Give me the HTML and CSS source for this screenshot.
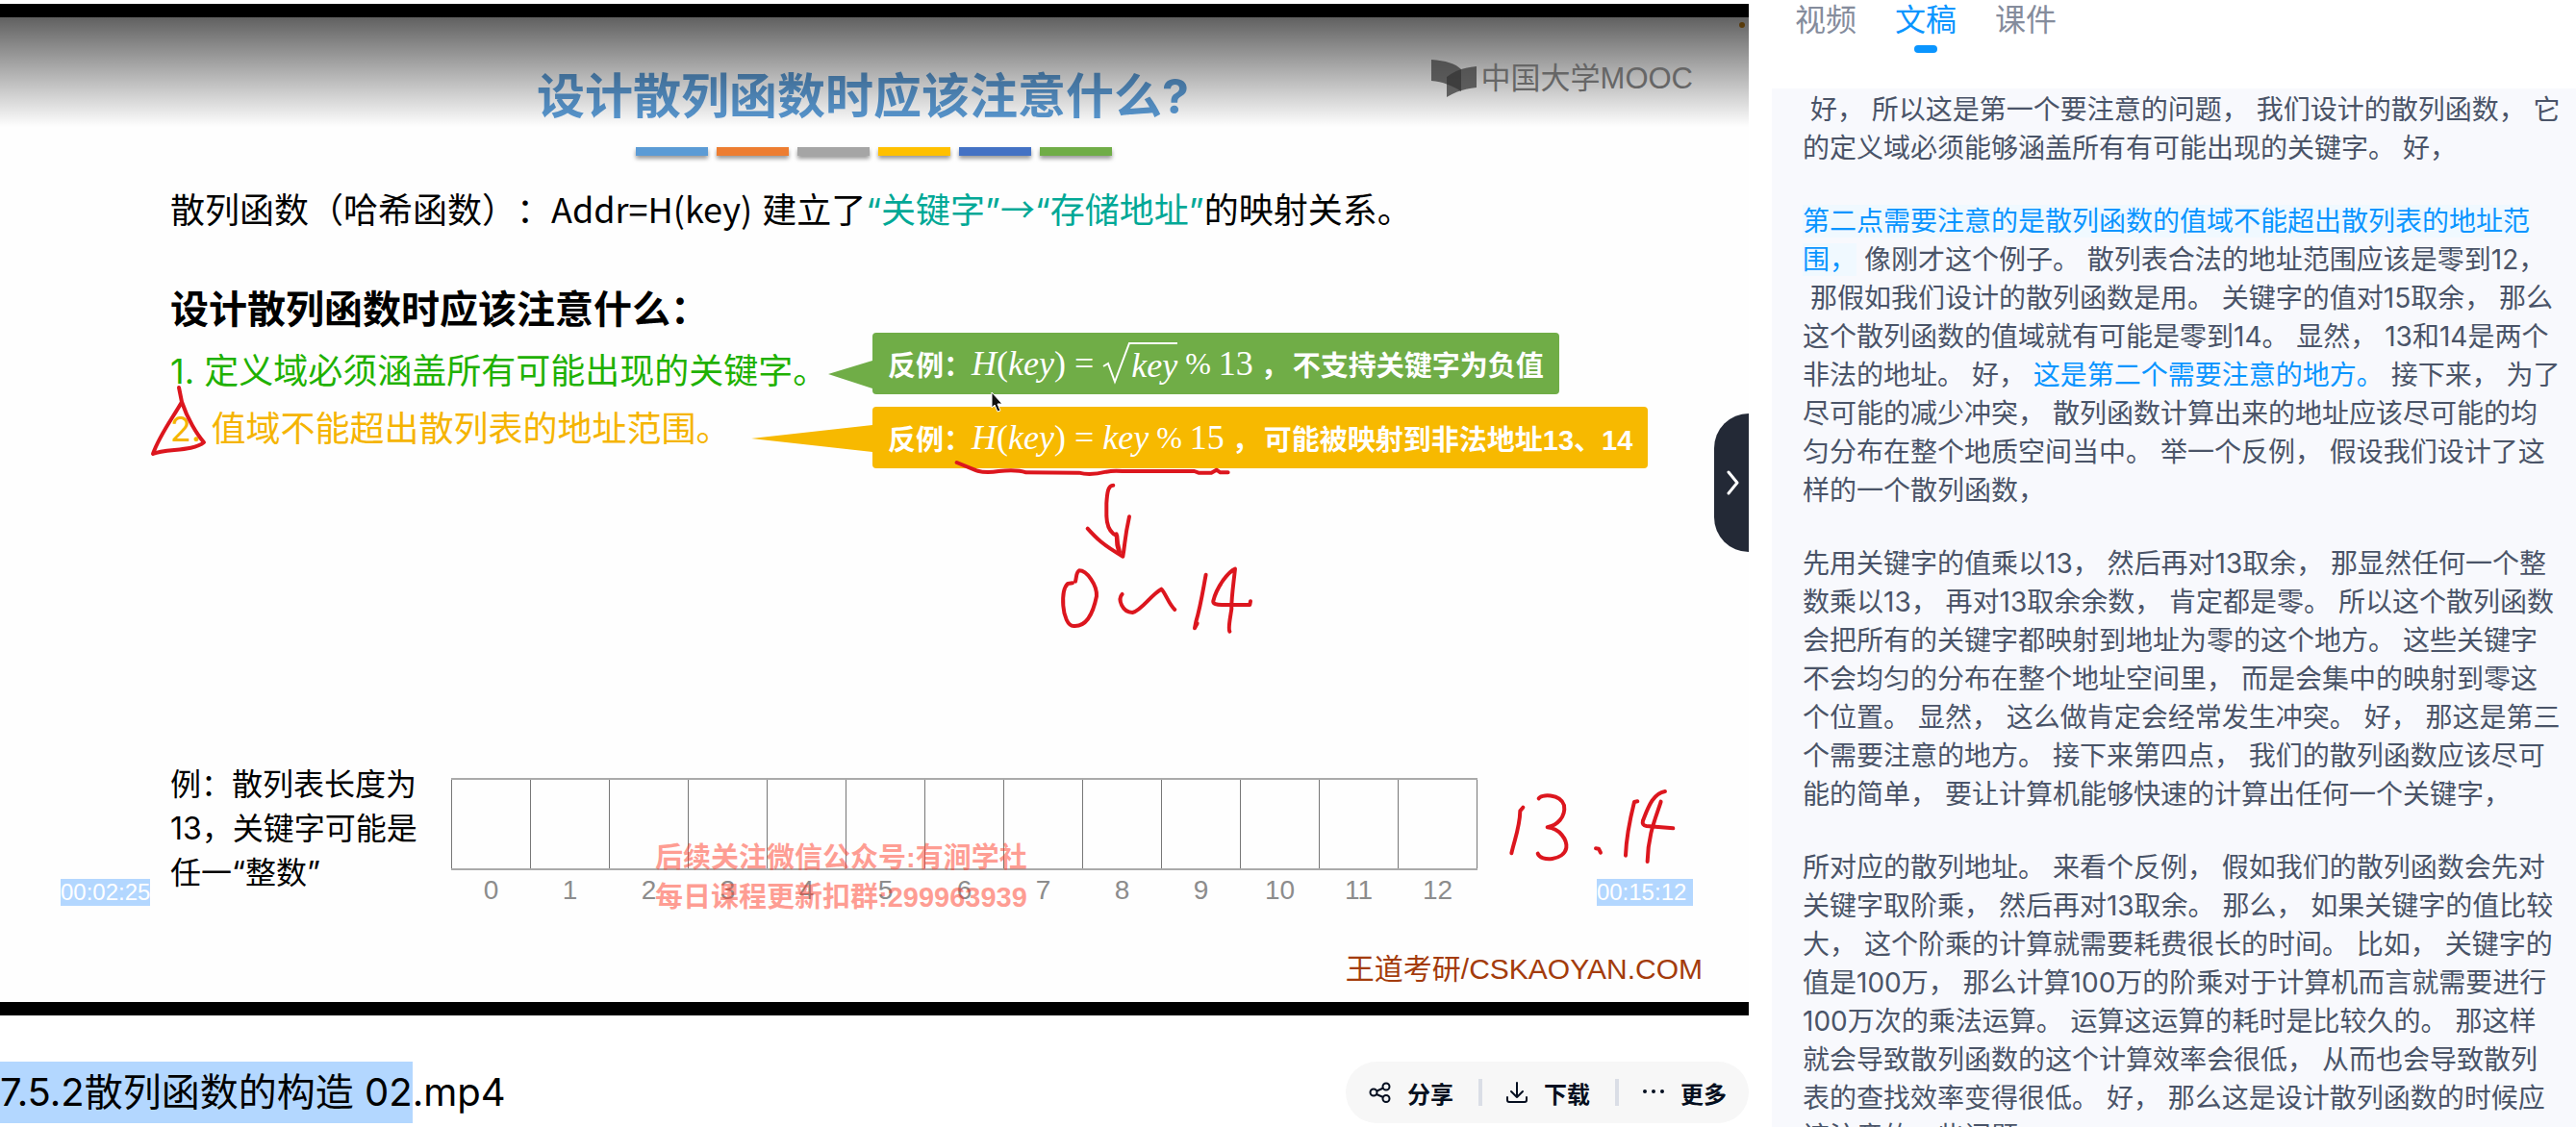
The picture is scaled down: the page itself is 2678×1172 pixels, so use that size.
FILE: index.html
```html
<!DOCTYPE html>
<html lang="zh-CN">
<head>
<meta charset="utf-8">
<title>7.5.2散列函数的构造 02.mp4</title>
<link rel="stylesheet" href="styles.css">
</head>
<body>
<div class="page">
  <main class="player">
    <section class="video">
      <div class="slide">
        <h1 class="slide-title">设计散列函数时应该注意什么?</h1>
        <div class="bars">
          <span class="bar bar-sky"></span><span class="bar bar-orange"></span><span class="bar bar-gray"></span><span class="bar bar-gold"></span><span class="bar bar-blue"></span><span class="bar bar-green"></span>
        </div>
        <p class="intro">散列函数（哈希函数）<span class="mid-colon">：</span><span class="formula">Addr=H(key)</span> 建立了<span class="teal">“关键字”<span class="formula">→</span>“存储地址”</span>的映射关系。</p>
        <h2 class="subhead">设计散列函数时应该注意什么：</h2>
        <div class="rules">
          <div class="rule-list">
            <p class="rule rule-green">1. 定义域必须涵盖所有可能出现的关键字。</p>
            <p class="rule rule-gold">2. 值域不能超出散列表的地址范围。</p>
          </div>
          <div class="callouts">
            <div class="callout callout-green">
              <svg class="tail tail-short" viewBox="0 0 46 64"><path d="M46 29L0 43L46 58Z" fill="#70ad47"/></svg>
              <span>反例：</span><span class="math"><i>H</i>(<i>key</i>) = </span><span class="root"><svg class="radical" viewBox="0 0 30 44"><path d="M1 25L6 22L13 41L28 1H30" fill="none" stroke="#fff" stroke-width="2"/></svg><span class="math radicand"><i>key</i></span></span><span class="math percent">%</span><span class="math">13</span><span class="math-comma">，</span><span>不支持关键字为负值</span>
            </div>
            <div class="callout callout-gold">
              <svg class="tail tail-long" viewBox="0 0 126 64"><path d="M126 19L0 33L126 47Z" fill="#f7b900"/></svg>
              <span>反例：</span><span class="math"><i>H</i>(<i>key</i>) = <i>key</i></span><span class="math percent">%</span><span class="math">15</span><span class="math-comma">，</span><span>可能被映射到非法地址13、14</span>
            </div>
          </div>
        </div>
        <div class="example">
          <p class="example-text">例：散列表长度为<br>13，关键字可能是<br>任一“整数”</p>
          <table class="cells">
            <tbody>
              <tr class="slots"><td></td><td></td><td></td><td></td><td></td><td></td><td></td><td></td><td></td><td></td><td></td><td></td><td></td></tr>
              <tr class="indexes"><td>0</td><td>1</td><td>2</td><td>3</td><td>4</td><td>5</td><td>6</td><td>7</td><td>8</td><td>9</td><td>10</td><td>11</td><td>12</td></tr>
            </tbody>
          </table>
        </div>
        <p class="credit">王道考研/CSKAOYAN.COM</p>

        <svg class="ink" viewBox="0 18 1818 1024" aria-hidden="true">
          <g fill="none" stroke="#dc161e" stroke-linecap="round" stroke-linejoin="round">
            <path stroke-width="4" d="M186 403L189 418C180 434 166 452 159 472C172 466 200 470 212 460C205 452 195 436 189 418"/>
            <g transform="translate(970 470) scale(.3333)" stroke-width="12">
              <path d="M74 33L130 56Q160 68 205 60Q260 54 290 64L455 65Q490 74 540 62Q560 58 590 60L815 60L828 65L868 65L884 56L896 64L920 64"/>
              <path d="M562 104C545 104 543 130 541 160V200C542 230 550 245 562 255L574 262L576 285L582 312"/>
              <path d="M482 239C510 270 530 290 592 326C600 280 597 270 612 202"/>
              <path d="M572 256L574 290L578 305"/>
              <path d="M435 409L420 411C405 425 404 450 406 480C408 510 420 545 440 543C480 545 500 500 510 450C512 415 480 370 456 370C446 375 448 390 444 404"/>
              <path d="M590 444C575 460 590 500 622 501C650 495 680 445 712 428C725 440 735 475 754 492"/>
              <path d="M851 383C842 430 835 480 820 530L816 550L824 535"/>
              <path d="M990 466L988 477H905Q872 478 874 465C885 420 920 375 942 365C935 430 930 460 931 490C925 530 920 550 925 560"/>
            </g>
            <g transform="translate(1540 800) scale(.3333)" stroke-width="12">
              <path d="M130 119L121 130C120 180 105 215 94 262"/>
              <path d="M179 91C185 78 245 75 258 112C264 150 235 175 206 181C245 185 268 220 265 245C258 285 185 290 176 263"/>
              <path d="M357 247L366 248L372 260"/>
              <path d="M487 100L477 102C465 150 452 215 450 269"/>
              <path d="M573 69C535 75 520 120 504 160Q500 175 515 177L598 184"/>
              <path d="M560 101C545 150 520 200 518 288"/>
            </g>
          </g>
          <path d="M1031 408V424L1034 421L1037 428L1040 427L1037 420H1042Z" fill="#111" stroke="#fff" stroke-width="1"/>
          <circle cx="1811" cy="26" r="3" fill="#d08a1a"/>
        </svg>
        <p class="watermark">后续关注微信公众号:有涧学社<br>每日课程更新扣群:299963939</p>
        <div class="shade"></div>
        <div class="logo">
          <svg class="logo-mark" viewBox="0 0 48 40"><path d="M0 0C15 1 25 4 31 10V33C22 27 12 23 0 22Z" fill="#333" fill-opacity=".72"/><path d="M16 39V18C25 11 35 8 47 7V29C36 30 26 33 16 39Z" fill="#333" fill-opacity=".72"/></svg>
          <span>中国大学MOOC</span>
        </div>
      </div>
      <time class="clock clock-now">00:02:25</time>
      <time class="clock clock-total">00:15:12 </time>
      <button class="handle" type="button" aria-label="收起"><svg viewBox="0 0 16 26" width="16" height="26"><path d="M3 2L12 13L3 24" fill="none" stroke="#fff" stroke-width="3" stroke-linecap="round" stroke-linejoin="round"/></svg></button>
    </section>
    <footer class="info">
      <h2 class="filename"><mark>7.5.2散列函数的构造 02</mark>.mp4</h2>
      <div class="actions">
        <button class="action" type="button"><svg viewBox="0 0 24 24" width="24" height="24" fill="none" stroke="#050f20" stroke-width="2"><circle cx="5" cy="12" r="3.5"/><circle cx="18" cy="6" r="3.5"/><circle cx="18" cy="18.5" r="3.5"/><path d="M8.5 10.500L15 7.500M8 14L15 17"/></svg><span>分享</span></button>
        <button class="action" type="button"><svg viewBox="0 0 24 24" width="24" height="24" fill="none" stroke="#050f20" stroke-width="2" stroke-linecap="round" stroke-linejoin="round"><path d="M12 2V17M6 11L12 17L18 11M2 17V20Q2 22 4 22H20Q22 22 22 20V17"/></svg><span>下载</span></button>
        <button class="action" type="button"><svg viewBox="0 0 24 24" width="24" height="24" fill="#050f20"><circle cx="3" cy="11" r="2"/><circle cx="12" cy="11" r="2"/><circle cx="21" cy="11" r="2"/></svg><span>更多</span></button>
      </div>
    </footer>
  </main>
  <aside class="side">
    <nav class="tabs">
      <a class="tab" href="#video">视频</a>
      <a class="tab tab-active" href="#text">文稿</a>
      <a class="tab" href="#slides">课件</a>
    </nav>
    <div class="transcript" id="text">
      <p> 好， 所以这是第一个要注意的问题， 我们设计的散列函数， 它
的定义域必须能够涵盖所有有可能出现的关键字。 好，</p>
      <p><span class="hit">第二点需要注意的是散列函数的值域不能超出散列表的地址范
围，</span> 像刚才这个例子。 散列表合法的地址范围应该是零到12，
 那假如我们设计的散列函数是用。 关键字的值对15取余， 那么
这个散列函数的值域就有可能是零到14。 显然， 13和14是两个
非法的地址。 好， <span class="note">这是第二个需要注意的地方。</span> 接下来， 为了
尽可能的减少冲突， 散列函数计算出来的地址应该尽可能的均
匀分布在整个地质空间当中。 举一个反例， 假设我们设计了这
样的一个散列函数，</p>
      <p>先用关键字的值乘以13， 然后再对13取余， 那显然任何一个整
数乘以13， 再对13取余余数， 肯定都是零。 所以这个散列函数
会把所有的关键字都映射到地址为零的这个地方。 这些关键字
不会均匀的分布在整个地址空间里， 而是会集中的映射到零这
个位置。 显然， 这么做肯定会经常发生冲突。 好， 那这是第三
个需要注意的地方。 接下来第四点， 我们的散列函数应该尽可
能的简单， 要让计算机能够快速的计算出任何一个关键字，</p>
      <p>所对应的散列地址。 来看个反例， 假如我们的散列函数会先对
关键字取阶乘， 然后再对13取余。 那么， 如果关键字的值比较
大， 这个阶乘的计算就需要耗费很长的时间。 比如， 关键字的
值是100万， 那么计算100万的阶乘对于计算机而言就需要进行
100万次的乘法运算。 运算这运算的耗时是比较久的。 那这样
就会导致散列函数的这个计算效率会很低， 从而也会导致散列
表的查找效率变得很低。 好， 那么这是设计散列函数的时候应
该注意的一些问题。</p>
    </div>
  </aside>
</div>
</body>
</html>
```

FILE: styles.css
```css
* { box-sizing: border-box; }
body {
  margin: 0;
  background: #fff;
  color: #000;
  font-family: Inter, "Noto Sans CJK SC", sans-serif;
  text-spacing-trim: space-all;
}
h1, h2, p { margin: 0; font-weight: 400; }
button { border: 0; padding: 0; background: none; font: inherit; color: inherit; }
svg { display: block; }

.page {
  display: grid;
  grid-template-columns: 1818fr 860fr;
  height: 100vh;
  overflow: hidden;
}
.player { padding-top: 4px; min-width: 0; }

.video { position: relative; padding: 14px 0; background: #000; }
.slide {
  position: relative;
  height: 1024px;
  padding-top: 52px;
  background: #fefefe;
  overflow: hidden;
  white-space: nowrap;
}
.slide-title {
  color: #5b9bd5;
  font-size: 50px;
  font-weight: 700;
  line-height: 60px;
  text-align: center;
  padding-right: 24px;
}
.bars { display: flex; justify-content: center; gap: 9px; padding: 23px 2px 0 0; }
.bar { width: 75px; height: 9px; box-shadow: 0 3px 4px rgba(0, 0, 0, .4); }
.bar-sky { background: #5b9bd5; }
.bar-orange { background: #ed7d31; }
.bar-gray { background: #a5a5a5; }
.bar-gold { background: #ffc000; }
.bar-blue { background: #4472c4; }
.bar-green { background: #70ad47; }

.intro { padding: 30px 0 0 177px; font-size: 36px; line-height: 48px; }
.mid-colon { font-family: "Noto Sans CJK JP", sans-serif; }
.formula { font-family: "Noto Sans CJK SC", sans-serif; }
.teal { color: #00a896; }
.subhead { padding: 55px 0 0 177px; font-size: 40px; line-height: 48px; font-weight: 700; }

.rules { display: grid; grid-template-columns: 730px 1fr; padding-left: 177px; }
.rule-list { padding-top: 10px; }
.rule { font-size: 36px; line-height: 60px; }
.rule-green { color: #1fb100; }
.rule-gold { color: #f5b400; }
.callouts { display: flex; flex-direction: column; align-items: flex-start; gap: 13px; }
.callout {
  position: relative;
  display: flex;
  align-items: center;
  height: 64px;
  padding: 0 16px;
  border-radius: 4px;
  color: #fff;
  font-family: "Liberation Sans", "Noto Sans CJK SC", sans-serif;
  font-size: 29px;
  font-weight: 700;
}
.callout-green { background: #70ad47; }
.callout-gold { background: #f7b900; }
.tail { position: absolute; right: 100%; top: 0; height: 64px; }
.tail-short { width: 46px; }
.tail-long { width: 126px; }
.math { font-family: "Liberation Serif", serif; font-size: 36px; font-weight: 400; white-space: pre; }
.root { display: flex; align-items: center; }
.radical { width: 30px; height: 44px; }
.radicand { height: 44px; line-height: 44px; border-top: 2px solid #fff; }
.percent { font-size: 32px; padding: 0 8px; }
.math-comma { padding: 0 4px 0 8px; }

.example { display: flex; padding: 306px 0 0 177px; }
.example-text { width: 292px; font-size: 32px; line-height: 46px; }
.cells { table-layout: fixed; width: 1067px; margin-top: 16px; border-collapse: collapse; }
.cells td { padding: 0; }
.slots td { height: 94px; border: 2px solid #aaa; border-width: 2px 1px; border-left-color: #777; border-right-color: #777; }
.indexes td {
  height: 42px;
  color: #8c8c8c;
  font-family: "Liberation Sans", sans-serif;
  font-size: 28px;
  text-align: center;
}
.credit {
  position: absolute;
  right: 48px;
  bottom: 14px;
  color: #a33b0b;
  font-family: "Liberation Sans", "Noto Sans CJK SC", sans-serif;
  font-size: 30px;
  line-height: 40px;
}
.ink { position: absolute; left: 0; top: 0; width: 1818px; height: 1024px; }
.watermark {
  position: absolute;
  left: 681px;
  top: 854px;
  color: rgba(255, 60, 40, .5);
  font-family: "Liberation Sans", "Noto Sans CJK SC", sans-serif;
  font-size: 29px;
  font-weight: 700;
  line-height: 41px;
}
.shade {
  position: absolute;
  inset: 0 0 auto;
  height: 114px;
  background: linear-gradient(rgba(0, 0, 0, .62), rgba(0, 0, 0, .28) 55%, rgba(0, 0, 0, 0));
}
.logo {
  position: absolute;
  right: 58px;
  top: 40px;
  display: flex;
  align-items: center;
  gap: 4px;
  height: 48px;
  color: #666;
  font-family: "Liberation Sans", "Noto Sans CJK SC", sans-serif;
  font-size: 31px;
  line-height: 40px;
}
.logo-mark { width: 48px; height: 40px; }
.clock {
  position: absolute;
  top: 910px;
  height: 28px;
  background: #b3d7ff;
  color: #fff;
  font-family: "Liberation Sans", sans-serif;
  font-size: 24px;
  line-height: 28px;
  white-space: pre;
}
.clock-now { left: 63px; }
.clock-total { right: 58px; }
.handle {
  position: absolute;
  right: 0;
  top: 426px;
  width: 36px;
  height: 144px;
  padding-left: 12px;
  border-radius: 36px 0 0 36px;
  background: #232936;
}

.info { display: flex; justify-content: space-between; padding-top: 48px; }
.filename { font-size: 40px; line-height: 64px; white-space: nowrap; }
.filename mark { display: inline-block; background: #b3d7ff; color: #000; }
.actions { display: flex; align-items: center; height: 64px; padding: 0 23px 0 24px; border-radius: 32px; background: #f7f7f7; }
.action {
  display: flex;
  align-items: center;
  gap: 16px;
  height: 28px;
  color: #050f20;
  font-size: 24px;
  font-weight: 700;
}
.action + .action { margin-left: 26px; padding-left: 24px; border-left: 4px solid #dadee6; }

.side { padding-left: 24px; min-width: 0; }
.tabs { display: flex; gap: 40px; height: 92px; padding-left: 24px; }
.tab {
  position: relative;
  height: 55px;
  color: #858c9c;
  font-size: 32px;
  line-height: 42px;
  text-decoration: none;
}
.tab-active { color: #0a95ff; }
.tab-active::after {
  content: "";
  position: absolute;
  left: 20px;
  bottom: 0;
  width: 24px;
  height: 8px;
  border-radius: 4px;
  background: #0a95ff;
}
.transcript {
  display: flex;
  flex-direction: column;
  gap: 36px;
  padding: 2px 0 0 32px;
  background: #f8f9fd;
  color: #4a5468;
  font-size: 28px;
  line-height: 40px;
  white-space: pre;
}
.hit { color: #0a95ff; background: #f0f9ff; }
.note { color: #0a95ff; }
```
